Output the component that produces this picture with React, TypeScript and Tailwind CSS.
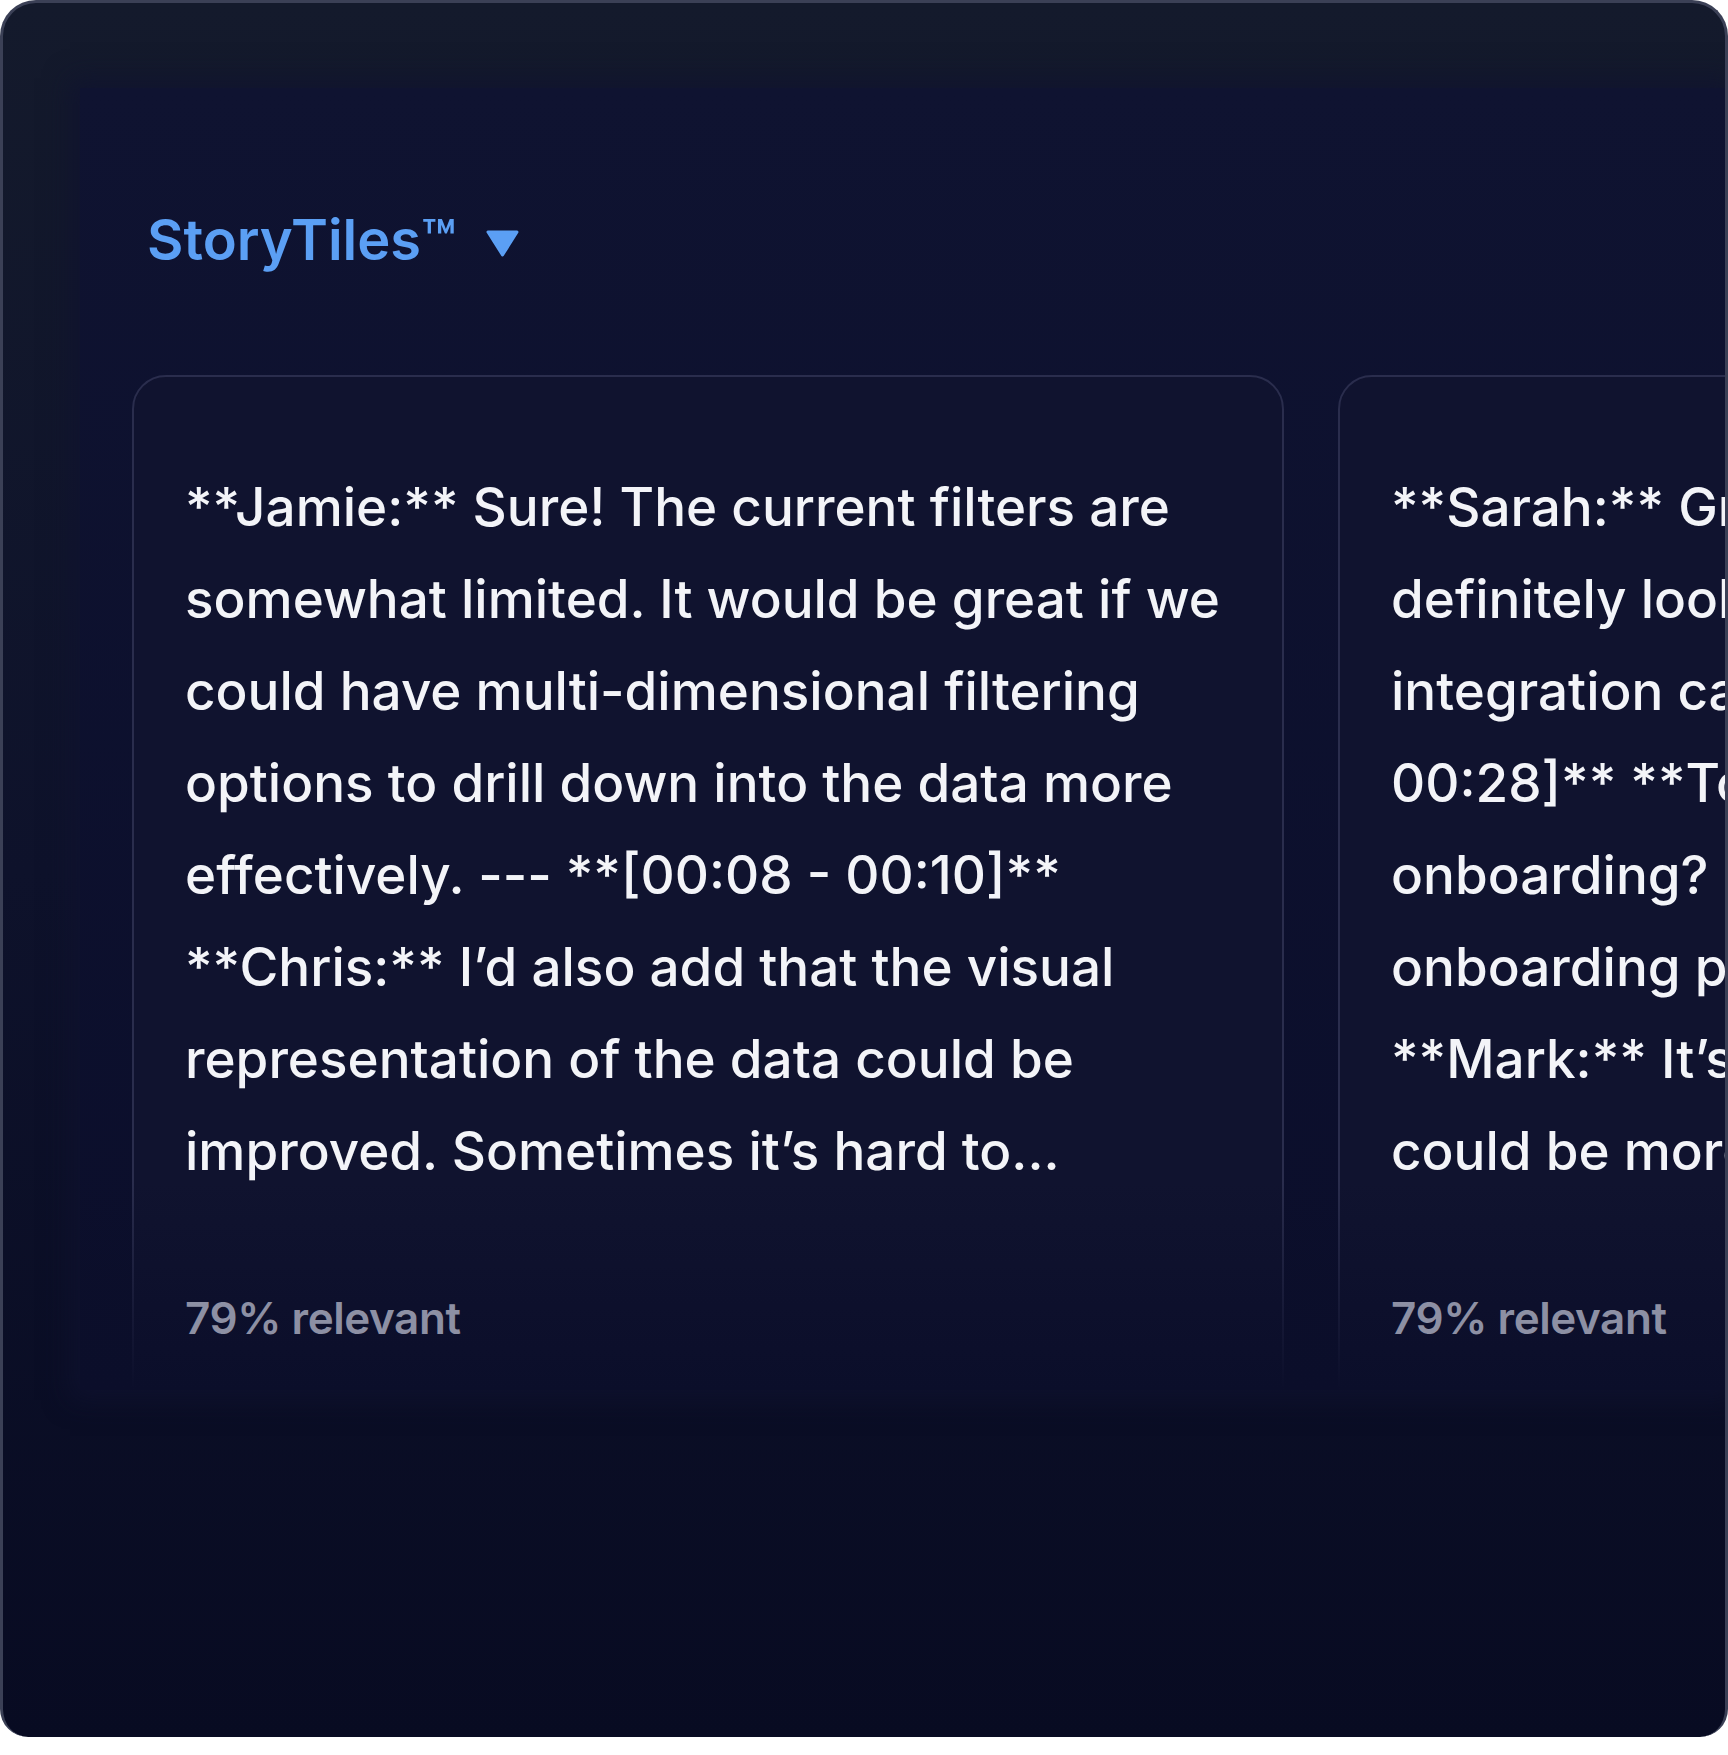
import React from "react";

const card1 = [
  "**Jamie:** Sure! The current filters are",
  "somewhat limited. It would be great if we",
  "could have multi-dimensional filtering",
  "options to drill down into the data more",
  "effectively. --- **[00:08 - 00:10]**",
  "**Chris:** I\u2019d also add that the visual",
  "representation of the data could be",
  "improved. Sometimes it\u2019s hard to...",
];

const card2 = [
  "**Sarah:** Great point. We should",
  "definitely look into the integration",
  "integration capabilities. --- **[00:26 -",
  "00:28]** **Tom:** What about the",
  "onboarding? Is there anything in the",
  "onboarding process we could improve?",
  "**Mark:** It\u2019s fairly intuitive, but it",
  "could be more streamlined...",
];

function Tile({ lines }: { lines: string[] }) {
  return (
    <div className="w-[1152px] shrink-0 h-[1100px] rounded-[34px] border-2 border-[#2a2d4d] bg-[#10132f] pl-[51px] pr-[40px] pt-[84px]">
      <div className="text-[53px] leading-[92px] font-medium text-[#f3f4f8] whitespace-nowrap">
        {lines.map((l, i) => (
          <div key={i}>{l}</div>
        ))}
      </div>
      <div className="relative z-10 mt-[91px] text-[44px] leading-[60px] font-semibold text-[#8d90a4] tracking-[-0.01em]">79% relevant</div>
    </div>
  );
}

export default function App() {
  return (
    <div className="w-[1728px] h-[1755px] bg-white font-['Inter','Noto_Sans',sans-serif]">
      <div className="relative h-[1737px] rounded-t-[36px] rounded-b-[28px] border-[3px] border-b-0 border-[#3b4056] bg-gradient-to-b from-[#141a2c] via-[#0e122b] to-[#080b22] overflow-hidden pl-[77px] pt-[85px]">
        <div className="relative h-[1302px] bg-gradient-to-b from-[#0f1331] to-[#0b0e2b] overflow-hidden shadow-[0_0_24px_10px_rgba(15,19,49,0.7)]">
          <div className="mt-[120px] ml-[67px] h-[64px] flex items-center gap-[30px]">
            <span className="text-[56px] leading-none font-semibold text-[#5b9ff4]">StoryTiles™</span>
            <svg width="33" height="27" viewBox="0 0 33 27" className="mt-[6px]">
              <path d="M2 2 L31 2 L16.5 25 Z" fill="#5b9ff4" stroke="#5b9ff4" strokeWidth="3" strokeLinejoin="round" />
            </svg>
          </div>
          <div className="mt-[103px] ml-[52px] flex gap-[54px]">
            <Tile lines={card1} />
            <Tile lines={card2} />
          </div>
          <div className="absolute left-0 right-0 bottom-0 h-[210px] bg-gradient-to-b from-transparent to-[#0b0e2a]" />
        </div>
      </div>
    </div>
  );
}
